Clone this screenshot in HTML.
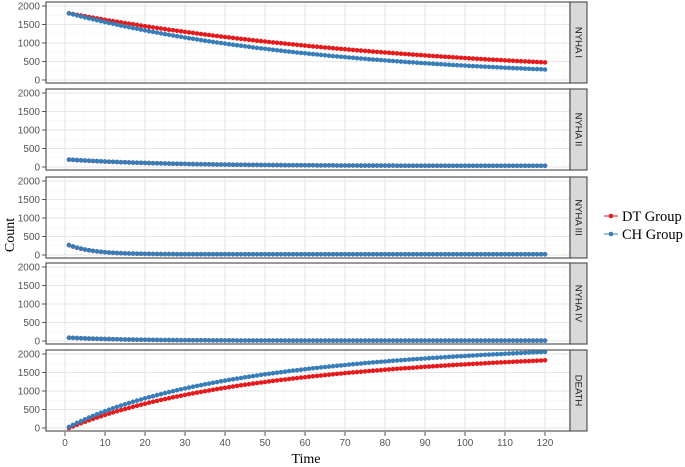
<!DOCTYPE html>
<html><head><meta charset="utf-8"><style>
html,body{margin:0;padding:0;background:#fff;width:685px;height:467px;overflow:hidden}
svg{display:block}
text{font-family:"Liberation Sans",sans-serif}
</style></head><body>
<svg id="s" width="685" height="467" xmlns="http://www.w3.org/2000/svg"></svg>
<script>
var s=document.getElementById('s'),h='';
var L=46,R=570,SR=587;
var tops=[2,89,177,263,350],H=81;
var names=['NYHA I','NYHA II','NYHA III','NYHA IV','DEATH'];
function X(t){return 65+4*t;}
var fns=[
 [function(t){return 1800*Math.exp(-0.0112*(t-1))},function(t){return 1800*Math.exp(-0.0155*(t-1))}],
 [function(t){return 30+168*Math.exp(-(t-1)/25)},function(t){return 30+170*Math.exp(-(t-1)/25)}],
 [function(t){return 20+245*Math.exp(-(t-1)/6)},function(t){return 20+250*Math.exp(-(t-1)/6)}],
 [function(t){return 10+78*Math.exp(-(t-1)/15)},function(t){return 10+80*Math.exp(-(t-1)/15)}],
 [function(t){return 0.55*1830*(1-Math.exp(-(t-1)/45))/0.93+0.45*1830*Math.log(1+(t-1)/20)/Math.log(1+119/20)},
  function(t){return 30+0.55*2030*(1-Math.exp(-(t-1)/42))/0.94+0.45*2020*Math.log(1+(t-1)/15)/Math.log(1+119/15)}]
];
for(var p=0;p<5;p++){
 var T=tops[p],B=T+H;
 function Y(v){return T+78-v*0.037;}
 h+='<rect x="'+L+'" y="'+T+'" width="'+(R-L)+'" height="'+H+'" fill="#fff"/>';
 for(var v=250;v<=2000;v+=500)h+='<line x1="'+L+'" x2="'+R+'" y1="'+Y(v)+'" y2="'+Y(v)+'" stroke="#f3f3f3" stroke-width="0.6"/>';
 for(var t=5;t<=125;t+=10)h+='<line y1="'+T+'" y2="'+B+'" x1="'+X(t)+'" x2="'+X(t)+'" stroke="#f3f3f3" stroke-width="0.6"/>';
 for(var v=0;v<=2000;v+=500){h+='<line x1="'+L+'" x2="'+R+'" y1="'+Y(v)+'" y2="'+Y(v)+'" stroke="#e6e6e6" stroke-width="1"/>';
  h+='<line x1="42" x2="'+L+'" y1="'+Y(v)+'" y2="'+Y(v)+'" stroke="#555"/>';
  h+='<text x="40" y="'+(Y(v)+3.5)+'" font-size="10" fill="#555" text-anchor="end">'+v+'</text>';}
 for(var t=0;t<=120;t+=10)h+='<line y1="'+T+'" y2="'+B+'" x1="'+X(t)+'" x2="'+X(t)+'" stroke="#e6e6e6" stroke-width="1"/>';
 for(var k=0;k<2;k++){var c=k?'#377eb8':'#e41a1c';
  for(var t=1;t<=120;t++)h+='<circle cx="'+X(t)+'" cy="'+Y(fns[p][k](t)).toFixed(1)+'" r="2.3" fill="'+c+'"/>';}
 h+='<rect x="'+L+'" y="'+T+'" width="'+(R-L)+'" height="'+H+'" fill="none" stroke="#555" stroke-width="1.2"/>';
 h+='<rect x="'+R+'" y="'+T+'" width="'+(SR-R)+'" height="'+H+'" fill="#d9d9d9" stroke="#555" stroke-width="1.2"/>';
 var cx=(R+SR)/2,cy=T+H/2;
 h+='<text x="'+cx+'" y="'+cy+'" font-size="9.5" fill="#222" text-anchor="middle" transform="rotate(90 '+cx+' '+cy+') translate(0 3)">'+names[p]+'</text>';
}
for(var t=0;t<=120;t+=10){h+='<line y1="432" y2="436" x1="'+X(t)+'" x2="'+X(t)+'" stroke="#555"/>';
 h+='<text x="'+X(t)+'" y="446" font-size="10" fill="#555" text-anchor="middle">'+t+'</text>';}
h+='<text x="306" y="463" font-size="14" fill="#000" text-anchor="middle" style="font-family:\'Liberation Serif\',serif">Time</text>';
h+='<text x="0" y="0" font-size="14" fill="#000" text-anchor="middle" transform="translate(14 235) rotate(-90)" style="font-family:\'Liberation Serif\',serif">Count</text>';
h+='<line x1="604" x2="618" y1="216" y2="216" stroke="#e41a1c"/><circle cx="611" cy="216" r="2.3" fill="#e41a1c"/>';
h+='<line x1="604" x2="618" y1="234" y2="234" stroke="#377eb8"/><circle cx="611" cy="234" r="2.3" fill="#377eb8"/>';
h+='<text x="622" y="221" font-size="14.5" fill="#000" style="font-family:\'Liberation Serif\',serif">DT Group</text>';
h+='<text x="622" y="239" font-size="14.5" fill="#000" style="font-family:\'Liberation Serif\',serif">CH Group</text>';
s.innerHTML=h;
</script>
</body></html>
